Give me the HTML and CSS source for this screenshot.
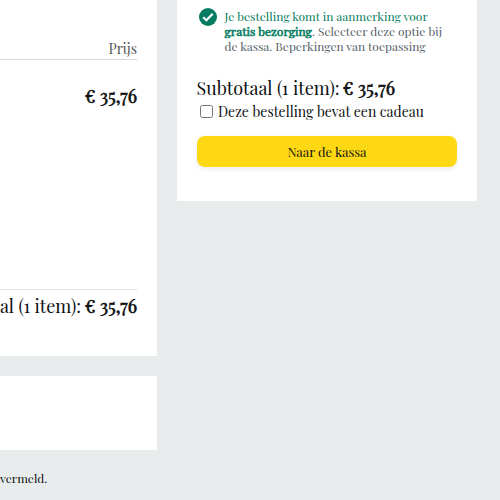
FILE: index.html
```
<!DOCTYPE html>
<html lang="nl">
<head>
<meta charset="utf-8">
<title>Winkelwagen</title>
<link rel="stylesheet" href="styles.css">
</head>
<body>
<div class="page">
  <main class="main">
    <section class="cart">
      <header class="cart-head"><span>Prijs</span></header>
      <div class="cart-item"><b class="price">€ 35,76</b></div>
      <footer class="cart-total"><span class="sum">al (1 item):</span><b class="price">€ 35,76</b></footer>
    </section>
    <section class="saved"></section>
    <p class="note">vermeld.</p>
  </main>
  <aside class="checkout">
    <div class="shipping">
      <svg class="check" viewBox="0 0 18 18"><circle cx="9" cy="9" r="9" fill="#067d62"/><path d="M4.2 9.2 7.4 12.3 13.7 5.7" fill="none" stroke="#fff" stroke-width="2.1"/></svg>
      <div class="shipping-text">
        <span class="green">Je bestelling komt in aanmerking voor</span><br>
        <b>gratis bezorging</b>. Selecteer deze optie bij<br>
        de kassa. Beperkingen van toepassing
      </div>
    </div>
    <div class="subtotal"><span class="sum">Subtotaal (1 item):</span><b class="price">€ 35,76</b></div>
    <label class="gift"><input type="checkbox"><span>Deze bestelling bevat een cadeau</span></label>
    <button class="pay">Naar de kassa</button>
  </aside>
</div>
</body>
</html>
```
FILE: styles.css
```
* { box-sizing: border-box; }
body {
  margin: 0;
  background: #e8eced;
  color: #0f1111;
  font-family: "Playfair Display", "Liberation Serif", serif;
}
b { font-weight: 400; -webkit-text-stroke: .6px currentColor; }
.page {
  display: grid;
  grid-template-columns: 157px 300px;
  column-gap: 20px;
  align-items: start;
  height: 500px;
  overflow: hidden;
  white-space: nowrap;
}
.cart {
  height: 356px;
  padding: 38px 20px 0 0;
  background: #fff;
}
.cart-head {
  height: 22px;
  border-bottom: 1px solid #d5d9d9;
  color: #565959;
  font-size: 14px;
  line-height: 21px;
  text-align: right;
}
.cart-item {
  display: flex;
  justify-content: flex-end;
  height: 229px;
  padding-top: 24px;
}
.cart-total {
  display: flex;
  justify-content: flex-end;
  gap: 4px;
  padding-top: 4px;
  border-top: 1px solid #dfe2e2;
}
.sum, .price { font-size: 18px; line-height: 24px; }
.saved { height: 74px; margin-top: 20px; background: #fff; }
.note { margin: 19px 0 0; font-size: 12px; line-height: 18px; }
.checkout {
  height: 201px;
  padding: 9px 20px 0;
  background: #fff;
}
.shipping { display: flex; gap: 7.5px; padding-left: 2px; height: 67px; }
.check { flex: none; width: 18px; height: 18px; margin-top: -1px; }
.shipping-text { color: #565f69; font-size: 12px; line-height: 15px; }
.green, .shipping-text b { color: #067d62; }
.subtotal { display: flex; gap: 3.5px; height: 25px; margin-left: -.5px; }
.gift { display: flex; align-items: center; height: 22px; font-size: 14px; line-height: 22px; }
.gift input { width: 13px; height: 13px; margin: -1px 5px 0 3px; }
.pay {
  display: block;
  width: 260px;
  height: 31px;
  margin-top: 13px;
  padding: 0 0 1px;
  border: 0;
  border-radius: 8px;
  background: #ffd814;
  box-shadow: 0 2px 5px rgba(213, 217, 217, .5);
  color: #0f1111;
  font: 13px "Playfair Display", "Liberation Serif", serif;
}
```
